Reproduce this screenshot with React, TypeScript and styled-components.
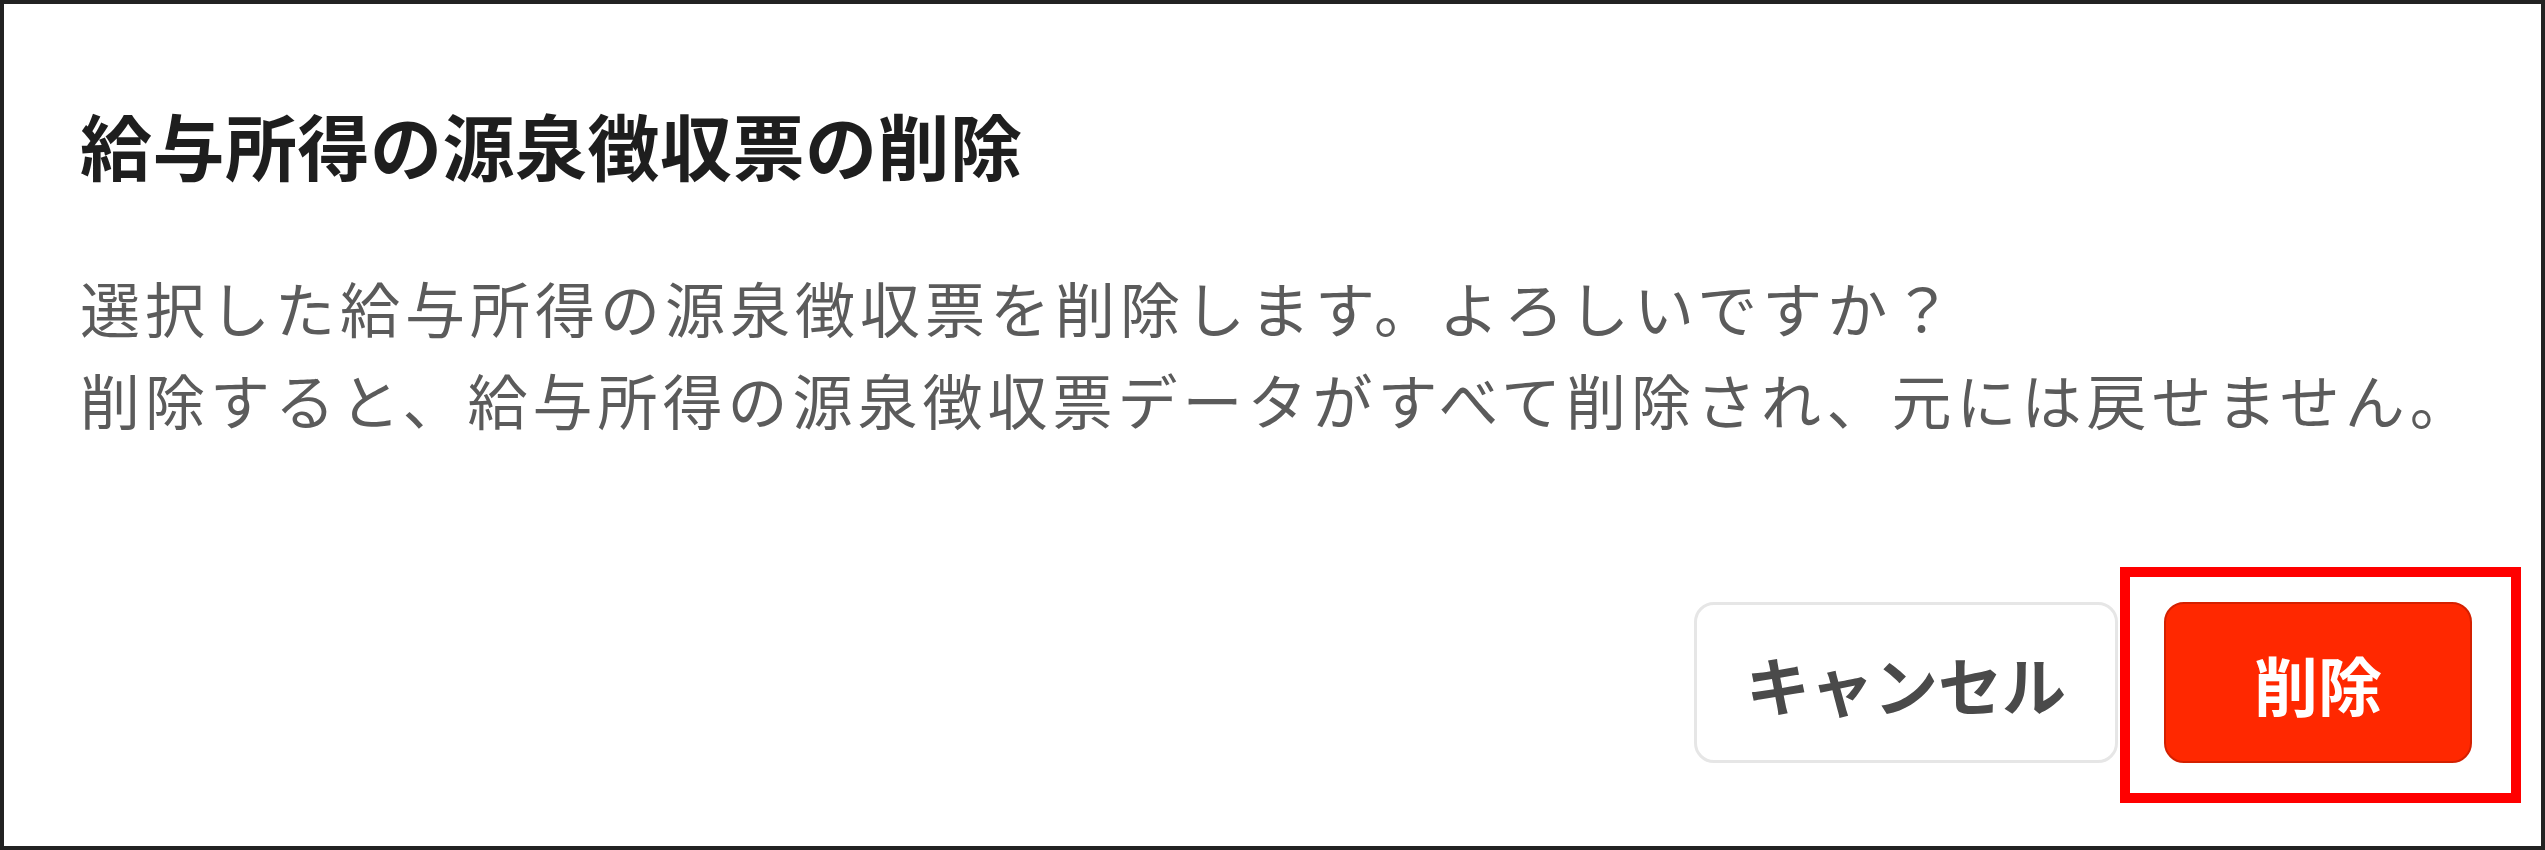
import React from 'react';
import styled, { createGlobalStyle } from 'styled-components';

const GlobalStyle = createGlobalStyle`
  html, body {
    margin: 0;
    padding: 0;
    background: #ffffff;
  }
  body {
    font-family: "Noto Sans CJK JP", "Noto Sans", sans-serif;
  }
`;

interface ActionButtonProps {
  variant: 'secondary' | 'danger';
  width: number;
}

const App: React.FC = () => {
  return (
    <>
      <GlobalStyle />
      <Dialog>
        <Title>給与所得の源泉徴収票の削除</Title>
        <Message>
          <Line>選択した給与所得の源泉徴収票を削除します。よろしいですか？</Line>
          <Line>削除すると、給与所得の源泉徴収票データがすべて削除され、元には戻せません。</Line>
        </Message>
        <Footer>
          <ActionButton variant="secondary" width={424}>
            キャンセル
          </ActionButton>
          <Highlight>
            <ActionButton variant="danger" width={308}>
              削除
            </ActionButton>
          </Highlight>
        </Footer>
      </Dialog>
    </>
  );
};

export default App;

// Styled components
const Dialog = styled.div`
  box-sizing: border-box;
  width: 2545px;
  height: 850px;
  display: flex;
  flex-direction: column;
  padding: 90px 69px 83px 76px;
  border: 4px solid #222222;
  background: #ffffff;
`;

const Title = styled.h2`
  margin: 0;
  font-size: 72px;
  font-weight: 700;
  line-height: 100px;
  letter-spacing: 0.5px;
  color: #1e1e1e;
  white-space: nowrap;
`;

const Message = styled.div`
  margin-top: 67px;
  display: flex;
  flex-direction: column;
  font-size: 60px;
  line-height: 92px;
  letter-spacing: 5px;
  color: #5b5b5b;
`;

const Line = styled.span`
  white-space: nowrap;
`;

const Footer = styled.div`
  margin-top: auto;
  display: flex;
  justify-content: flex-end;
  align-items: center;
  gap: 46px;
`;

const Highlight = styled.div`
  position: relative;
  display: flex;

  /* annotation frame drawn over the delete button */
  &::after {
    content: '';
    position: absolute;
    top: -35px;
    left: -44px;
    right: -49px;
    bottom: -40px;
    border: 10px solid #ff0000;
    pointer-events: none;
  }
`;

const ActionButton = styled.button<ActionButtonProps>`
  box-sizing: border-box;
  width: ${({ width }) => width}px;
  height: 161px;
  display: flex;
  align-items: center;
  justify-content: center;
  padding: 0;
  border-radius: 20px;
  font-family: "Noto Sans CJK JP", "Noto Sans", sans-serif;
  font-size: 64px;
  font-weight: 700;
  cursor: pointer;
  border: ${({ variant }) =>
    variant === 'danger' ? '2px solid #d42000' : '3px solid #e6e6e6'};
  background: ${({ variant }) => (variant === 'danger' ? '#ff2800' : '#ffffff')};
  color: ${({ variant }) => (variant === 'danger' ? '#ffffff' : '#4a4a4a')};
`;
